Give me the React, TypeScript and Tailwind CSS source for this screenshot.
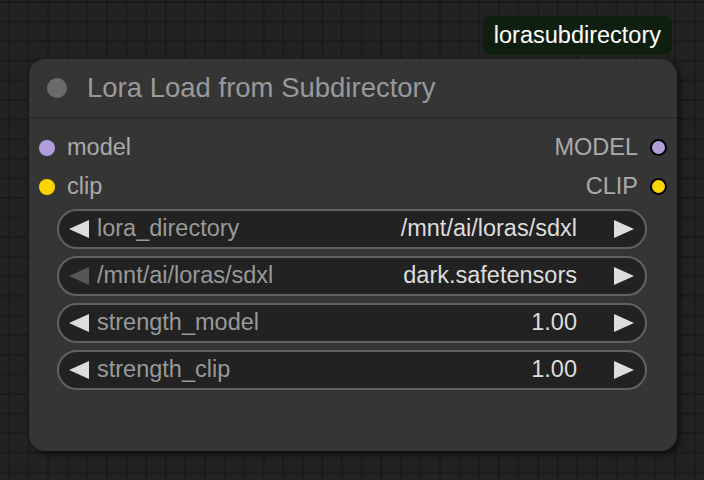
import React from "react";

const font = { fontFamily: '"Liberation Sans", Arial, sans-serif' };

function LeftArrow({ dim }: { dim?: boolean }) {
  return (
    <svg width="20" height="18" viewBox="0 0 20 18" className="shrink-0">
      <polygon points="20,0 20,18 0,9" fill={dim ? "#555555" : "#dddddd"} />
    </svg>
  );
}

function RightArrow() {
  return (
    <svg width="20" height="18" viewBox="0 0 20 18" className="shrink-0">
      <polygon points="0,0 0,18 20,9" fill="#dddddd" />
    </svg>
  );
}

function Widget({ label, value, dim }: { label: string; value: string; dim?: boolean }) {
  return (
    <div className="flex h-[40px] items-center rounded-full border-2 border-[#616161] bg-[#222222] pl-[10px] pr-[11px]">
      <LeftArrow dim={dim} />
      <span className="ml-[8px] text-[23.5px] leading-none text-[#999999]">{label}</span>
      <span className="ml-auto text-[23.5px] leading-none text-[#dddddd]">{value}</span>
      <span className="ml-[37px]">
        <RightArrow />
      </span>
    </div>
  );
}

export default function App() {
  return (
    <div
      style={font}
      className="relative h-[480px] w-[704px] overflow-hidden bg-[#222222] bg-[linear-gradient(to_right,#1b1b1b_2px,transparent_2px),linear-gradient(to_bottom,#1b1b1b_2px,transparent_2px)] [background-size:19.6px_19.6px] [background-position:8px_1px]"
    >
      <div className="flex justify-end pr-[32px] pt-[16px]">
        <div className="flex h-[39px] items-center rounded-[8px] bg-[#0f1f0f] px-[11px] text-[23.5px] leading-none text-white">
          lorasubdirectory
        </div>
      </div>
      <div className="ml-[29px] mt-[4px] flex h-[392px] w-[648px] flex-col rounded-[16px] bg-[#353535] shadow-[3px_3px_6px_rgba(0,0,0,0.55)]">
        <div className="flex h-[60px] items-center border-b-2 border-[#2b2b2b] pl-[18px]">
          <div className="h-[20px] w-[20px] rounded-full bg-[#6b6b6b]" />
          <span className="ml-[20px] text-[27.5px] leading-none text-[#999999]">Lora Load from Subdirectory</span>
        </div>
        <div className="flex flex-col pt-[9px]">
          <div className="flex h-[39px] items-center">
            <div className="ml-[10px] h-[16px] w-[16px] rounded-full bg-[#b39ddb]" />
            <span className="ml-[12px] text-[23.5px] leading-none text-[#aaaaaa]">model</span>
            <span className="ml-auto text-[23.5px] leading-none text-[#aaaaaa]">MODEL</span>
            <div className="ml-[12px] mr-[10px] h-[17px] w-[17px] rounded-full border-2 border-black bg-[#b39ddb]" />
          </div>
          <div className="flex h-[39px] items-center">
            <div className="ml-[10px] h-[16px] w-[16px] rounded-full bg-[#ffd500]" />
            <span className="ml-[12px] text-[23.5px] leading-none text-[#aaaaaa]">clip</span>
            <span className="ml-auto text-[23.5px] leading-none text-[#aaaaaa]">CLIP</span>
            <div className="ml-[12px] mr-[10px] h-[17px] w-[17px] rounded-full border-2 border-black bg-[#ffd500]" />
          </div>
        </div>
        <div className="mt-[3px] flex flex-col gap-[7px] pl-[28px] pr-[30px]">
          <Widget label="lora_directory" value="/mnt/ai/loras/sdxl" />
          <Widget label="/mnt/ai/loras/sdxl" value="dark.safetensors" dim />
          <Widget label="strength_model" value="1.00" />
          <Widget label="strength_clip" value="1.00" />
        </div>
      </div>
    </div>
  );
}
